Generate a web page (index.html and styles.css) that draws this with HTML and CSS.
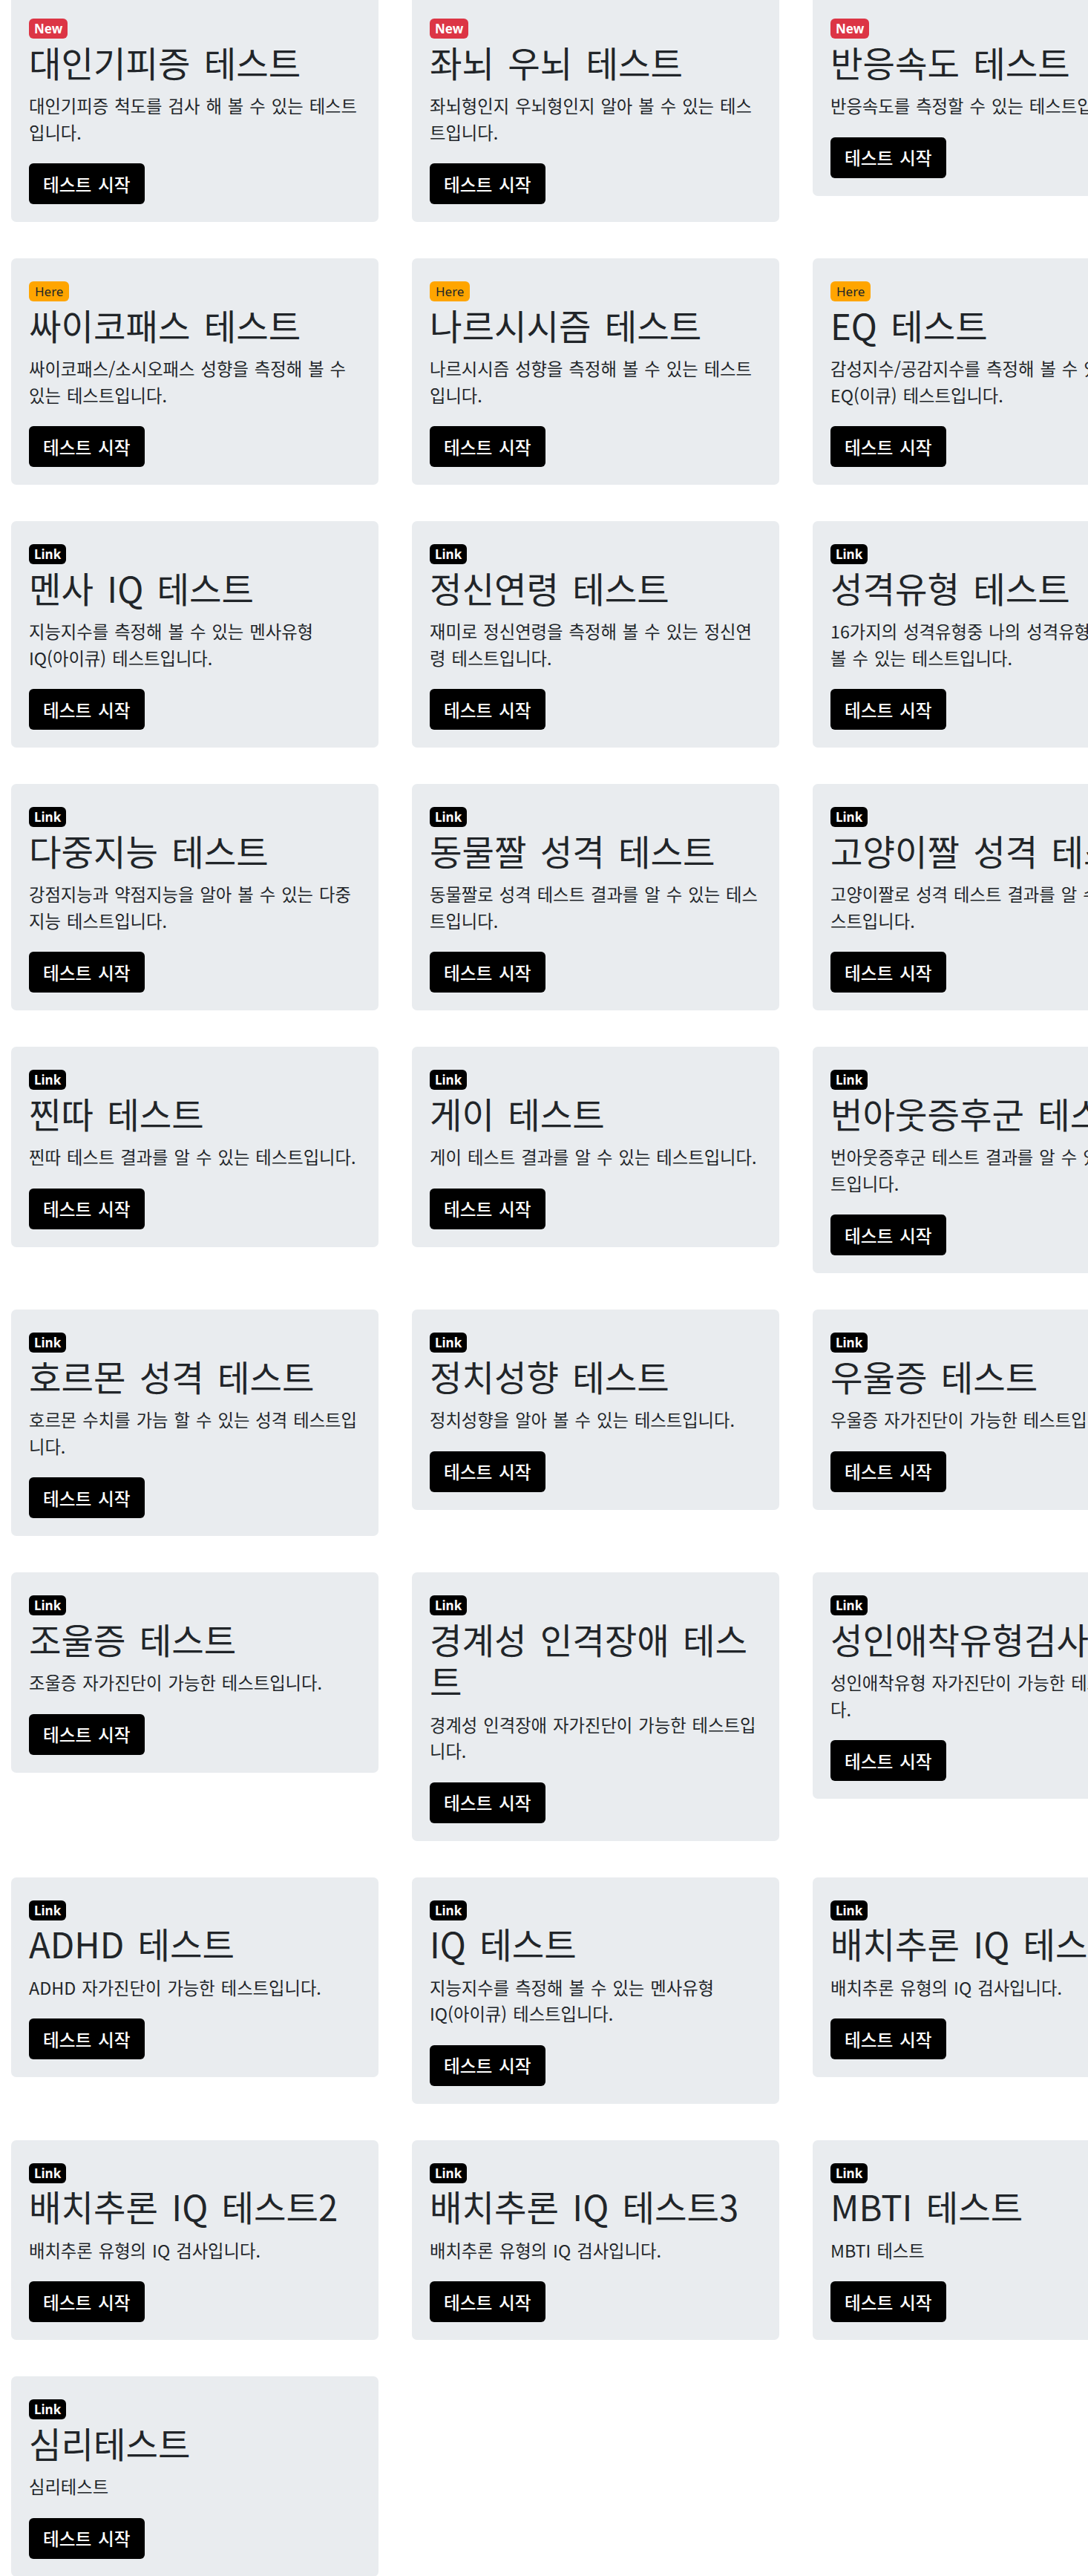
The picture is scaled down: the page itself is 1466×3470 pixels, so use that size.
FILE: index.html
```html
<!DOCTYPE html>
<html lang="ko">
<head>
<meta charset="utf-8">
<title>심리테스트</title>
<link rel="stylesheet" href="styles.css">
</head>
<body>
<main class="grid">
  <div class="card"><div class="badge-row"><span class="badge badge-new">New</span></div><h2 class="title">대인기피증 테스트</h2><p class="desc">대인기피증 척도를 검사 해 볼 수 있는 테스트입니다.</p><a class="btn">테스트 시작</a></div>
  <div class="card"><div class="badge-row"><span class="badge badge-new">New</span></div><h2 class="title">좌뇌 우뇌 테스트</h2><p class="desc">좌뇌형인지 우뇌형인지 알아 볼 수 있는 테스트입니다.</p><a class="btn">테스트 시작</a></div>
  <div class="card"><div class="badge-row"><span class="badge badge-new">New</span></div><h2 class="title">반응속도 테스트</h2><p class="desc">반응속도를 측정할 수 있는 테스트입니다.</p><a class="btn">테스트 시작</a></div>

  <div class="card"><div class="badge-row"><span class="badge badge-here">Here</span></div><h2 class="title">싸이코패스 테스트</h2><p class="desc">싸이코패스/소시오패스 성향을 측정해 볼 수 있는 테스트입니다.</p><a class="btn">테스트 시작</a></div>
  <div class="card"><div class="badge-row"><span class="badge badge-here">Here</span></div><h2 class="title">나르시시즘 테스트</h2><p class="desc">나르시시즘 성향을 측정해 볼 수 있는 테스트입니다.</p><a class="btn">테스트 시작</a></div>
  <div class="card"><div class="badge-row"><span class="badge badge-here">Here</span></div><h2 class="title">EQ 테스트</h2><p class="desc">감성지수/공감지수를 측정해 볼 수 있는 <span class="nw">EQ(이큐)</span> 테스트입니다.</p><a class="btn">테스트 시작</a></div>

  <div class="card"><div class="badge-row"><span class="badge badge-link">Link</span></div><h2 class="title">멘사 IQ 테스트</h2><p class="desc">지능지수를 측정해 볼 수 있는 멘사유형 <span class="nw">IQ(아이큐)</span> 테스트입니다.</p><a class="btn">테스트 시작</a></div>
  <div class="card"><div class="badge-row"><span class="badge badge-link">Link</span></div><h2 class="title">정신연령 테스트</h2><p class="desc">재미로 정신연령을 측정해 볼 수 있는 정신연령 테스트입니다.</p><a class="btn">테스트 시작</a></div>
  <div class="card"><div class="badge-row"><span class="badge badge-link">Link</span></div><h2 class="title">성격유형 테스트</h2><p class="desc">16가지의 성격유형중 나의 성격유형을 알아 볼 수 있는 테스트입니다.</p><a class="btn">테스트 시작</a></div>

  <div class="card"><div class="badge-row"><span class="badge badge-link">Link</span></div><h2 class="title">다중지능 테스트</h2><p class="desc">강점지능과 약점지능을 알아 볼 수 있는 다중지능 테스트입니다.</p><a class="btn">테스트 시작</a></div>
  <div class="card"><div class="badge-row"><span class="badge badge-link">Link</span></div><h2 class="title">동물짤 성격 테스트</h2><p class="desc">동물짤로 성격 테스트 결과를 알 수 있는 테스트입니다.</p><a class="btn">테스트 시작</a></div>
  <div class="card"><div class="badge-row"><span class="badge badge-link">Link</span></div><h2 class="title">고양이짤 성격 테스트</h2><p class="desc">고양이짤로 성격 테스트 결과를 알 수 있는 테스트입니다.</p><a class="btn">테스트 시작</a></div>

  <div class="card"><div class="badge-row"><span class="badge badge-link">Link</span></div><h2 class="title">찐따 테스트</h2><p class="desc">찐따 테스트 결과를 알 수 있는 테스트입니다.</p><a class="btn">테스트 시작</a></div>
  <div class="card"><div class="badge-row"><span class="badge badge-link">Link</span></div><h2 class="title">게이 테스트</h2><p class="desc">게이 테스트 결과를 알 수 있는 테스트입니다.</p><a class="btn">테스트 시작</a></div>
  <div class="card"><div class="badge-row"><span class="badge badge-link">Link</span></div><h2 class="title">번아웃증후군 테스트</h2><p class="desc">번아웃증후군 테스트 결과를 알 수 있는 테스트입니다.</p><a class="btn">테스트 시작</a></div>

  <div class="card"><div class="badge-row"><span class="badge badge-link">Link</span></div><h2 class="title">호르몬 성격 테스트</h2><p class="desc">호르몬 수치를 가늠 할 수 있는 성격 테스트입니다.</p><a class="btn">테스트 시작</a></div>
  <div class="card"><div class="badge-row"><span class="badge badge-link">Link</span></div><h2 class="title">정치성향 테스트</h2><p class="desc">정치성향을 알아 볼 수 있는 테스트입니다.</p><a class="btn">테스트 시작</a></div>
  <div class="card"><div class="badge-row"><span class="badge badge-link">Link</span></div><h2 class="title">우울증 테스트</h2><p class="desc">우울증 자가진단이 가능한 테스트입니다.</p><a class="btn">테스트 시작</a></div>

  <div class="card"><div class="badge-row"><span class="badge badge-link">Link</span></div><h2 class="title">조울증 테스트</h2><p class="desc">조울증 자가진단이 가능한 테스트입니다.</p><a class="btn">테스트 시작</a></div>
  <div class="card"><div class="badge-row"><span class="badge badge-link">Link</span></div><h2 class="title">경계성 인격장애 테스트</h2><p class="desc">경계성 인격장애 자가진단이 가능한 테스트입니다.</p><a class="btn">테스트 시작</a></div>
  <div class="card"><div class="badge-row"><span class="badge badge-link">Link</span></div><h2 class="title">성인애착유형검사</h2><p class="desc">성인애착유형 자가진단이 가능한 테스트입니다.</p><a class="btn">테스트 시작</a></div>

  <div class="card"><div class="badge-row"><span class="badge badge-link">Link</span></div><h2 class="title">ADHD 테스트</h2><p class="desc">ADHD 자가진단이 가능한 테스트입니다.</p><a class="btn">테스트 시작</a></div>
  <div class="card"><div class="badge-row"><span class="badge badge-link">Link</span></div><h2 class="title">IQ 테스트</h2><p class="desc">지능지수를 측정해 볼 수 있는 멘사유형 <span class="nw">IQ(아이큐)</span> 테스트입니다.</p><a class="btn">테스트 시작</a></div>
  <div class="card"><div class="badge-row"><span class="badge badge-link">Link</span></div><h2 class="title">배치추론 IQ 테스트</h2><p class="desc">배치추론 유형의 IQ 검사입니다.</p><a class="btn">테스트 시작</a></div>

  <div class="card"><div class="badge-row"><span class="badge badge-link">Link</span></div><h2 class="title">배치추론 IQ 테스트2</h2><p class="desc">배치추론 유형의 IQ 검사입니다.</p><a class="btn">테스트 시작</a></div>
  <div class="card"><div class="badge-row"><span class="badge badge-link">Link</span></div><h2 class="title">배치추론 IQ 테스트3</h2><p class="desc">배치추론 유형의 IQ 검사입니다.</p><a class="btn">테스트 시작</a></div>
  <div class="card"><div class="badge-row"><span class="badge badge-link">Link</span></div><h2 class="title">MBTI 테스트</h2><p class="desc">MBTI 테스트</p><a class="btn">테스트 시작</a></div>

  <div class="card"><div class="badge-row"><span class="badge badge-link">Link</span></div><h2 class="title">심리테스트</h2><p class="desc">심리테스트</p><a class="btn">테스트 시작</a></div>
</main>
</body>
</html>
```

FILE: styles.css
```css
html, body {
  margin: 0;
  padding: 0;
  background: #ffffff;
  overflow-x: hidden;
}

body {
  font-family: "Noto Sans CJK KR", "Noto Sans", sans-serif;
  color: #212529;
}

.grid {
  display: grid;
  grid-template-columns: repeat(3, 495px);
  column-gap: 45px;
  row-gap: 49px;
  align-items: start;
  padding-left: 15px;
  margin-top: -6px;
  width: max-content;
}

.card {
  background: #e9ecef;
  border-radius: 7px;
  padding: 31px 24px 24px;
}

.badge-row {
  height: 27px;
  display: flex;
  align-items: flex-start;
}

.badge {
  display: inline-block;
  height: 27px;
  line-height: 27px;
  padding: 0 7px;
  border-radius: 6px;
  font-family: "Noto Sans", sans-serif;
  font-size: 17px;
  font-weight: 700;
  color: #ffffff;
}

.badge-new {
  background: #dc3545;
}

.badge-here {
  background: #ffa500;
  color: #212529;
  font-weight: 400;
  padding: 0 8px;
}

.badge-link {
  background: #000000;
}

.title {
  margin: 3.5px 0 0;
  font-size: 47.3px;
  word-spacing: 5px;
  line-height: 56.5px;
  font-weight: 400;
  color: #212529;
}

.desc {
  margin: 13px 0 0;
  font-size: 23.3px;
  word-spacing: 1.5px;
  line-height: 35.5px;
  color: #212529;
}

.nw {
  white-space: nowrap;
}

.btn {
  display: inline-flex;
  align-items: center;
  height: 55px;
  margin-top: 24px;
  padding: 0 19px;
  background: #000000;
  color: #ffffff;
  border-radius: 6px;
  font-size: 23.7px;
  word-spacing: 1.9px;
  font-weight: 500;
  text-decoration: none;
}
```
